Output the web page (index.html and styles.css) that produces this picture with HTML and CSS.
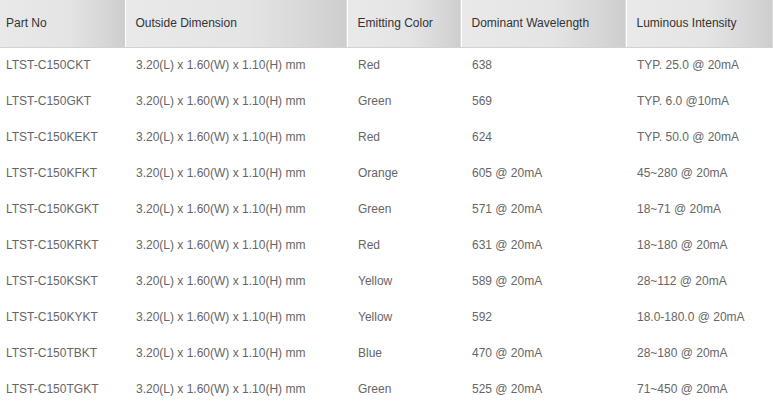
FILE: index.html
```html
<!DOCTYPE html>
<html>
<head>
<meta charset="utf-8">
<link rel="stylesheet" href="styles.css">
</head>
<body>
<table class="spec">
  <colgroup>
    <col class="c1"><col class="c2"><col class="c3"><col class="c4"><col class="c5">
  </colgroup>
  <thead>
    <tr><th>Part No</th><th>Outside Dimension</th><th>Emitting Color</th><th>Dominant Wavelength</th><th>Luminous Intensity</th></tr>
  </thead>
  <tbody>
    <tr><td>LTST-C150CKT</td><td>3.20(L) x 1.60(W) x 1.10(H) mm</td><td>Red</td><td>638</td><td>TYP. 25.0 @ 20mA</td></tr>
    <tr><td>LTST-C150GKT</td><td>3.20(L) x 1.60(W) x 1.10(H) mm</td><td>Green</td><td>569</td><td>TYP. 6.0 @10mA</td></tr>
    <tr><td>LTST-C150KEKT</td><td>3.20(L) x 1.60(W) x 1.10(H) mm</td><td>Red</td><td>624</td><td>TYP. 50.0 @ 20mA</td></tr>
    <tr><td>LTST-C150KFKT</td><td>3.20(L) x 1.60(W) x 1.10(H) mm</td><td>Orange</td><td>605 @ 20mA</td><td>45~280 @ 20mA</td></tr>
    <tr><td>LTST-C150KGKT</td><td>3.20(L) x 1.60(W) x 1.10(H) mm</td><td>Green</td><td>571 @ 20mA</td><td>18~71 @ 20mA</td></tr>
    <tr><td>LTST-C150KRKT</td><td>3.20(L) x 1.60(W) x 1.10(H) mm</td><td>Red</td><td>631 @ 20mA</td><td>18~180 @ 20mA</td></tr>
    <tr><td>LTST-C150KSKT</td><td>3.20(L) x 1.60(W) x 1.10(H) mm</td><td>Yellow</td><td>589 @ 20mA</td><td>28~112 @ 20mA</td></tr>
    <tr><td>LTST-C150KYKT</td><td>3.20(L) x 1.60(W) x 1.10(H) mm</td><td>Yellow</td><td>592</td><td>18.0-180.0 @ 20mA</td></tr>
    <tr><td>LTST-C150TBKT</td><td>3.20(L) x 1.60(W) x 1.10(H) mm</td><td>Blue</td><td>470 @ 20mA</td><td>28~180 @ 20mA</td></tr>
    <tr><td>LTST-C150TGKT</td><td>3.20(L) x 1.60(W) x 1.10(H) mm</td><td>Green</td><td>525 @ 20mA</td><td>71~450 @ 20mA</td></tr>
  </tbody>
</table>
</body>
</html>
```
FILE: styles.css
```css
html, body {
  margin: 0;
  padding: 0;
  background: #fff;
}
.spec {
  border-collapse: collapse;
  table-layout: fixed;
  width: 773px;
  font-family: "Liberation Sans", Arial, sans-serif;
  font-size: 12px;
}
.c1 { width: 125px; }
.c2 { width: 222px; }
.c3 { width: 114px; }
.c4 { width: 165px; }
.c5 { width: 147px; }
.spec th {
  height: 47px;
  padding: 0 0 1px 10px;
  text-align: left;
  font-weight: normal;
  color: #333;
  background: linear-gradient(to right, #e9e9e9 0%, #e4e4e4 55%, #d6d6d6 85%, #cdcdcd 100%);
  border-left: 1px solid #fff;
  border-bottom: 1px solid #d2d2d2;
  box-sizing: border-box;
  white-space: nowrap;
}
.spec th:first-child {
  border-left: none;
  padding-left: 6px;
}
.spec td {
  height: 36px;
  padding: 0 0 0 10px;
  color: #666;
  white-space: nowrap;
  box-sizing: border-box;
}
.spec td:first-child {
  padding-left: 6px;
}
.spec td + td {
  padding-left: 11px;
}
```
